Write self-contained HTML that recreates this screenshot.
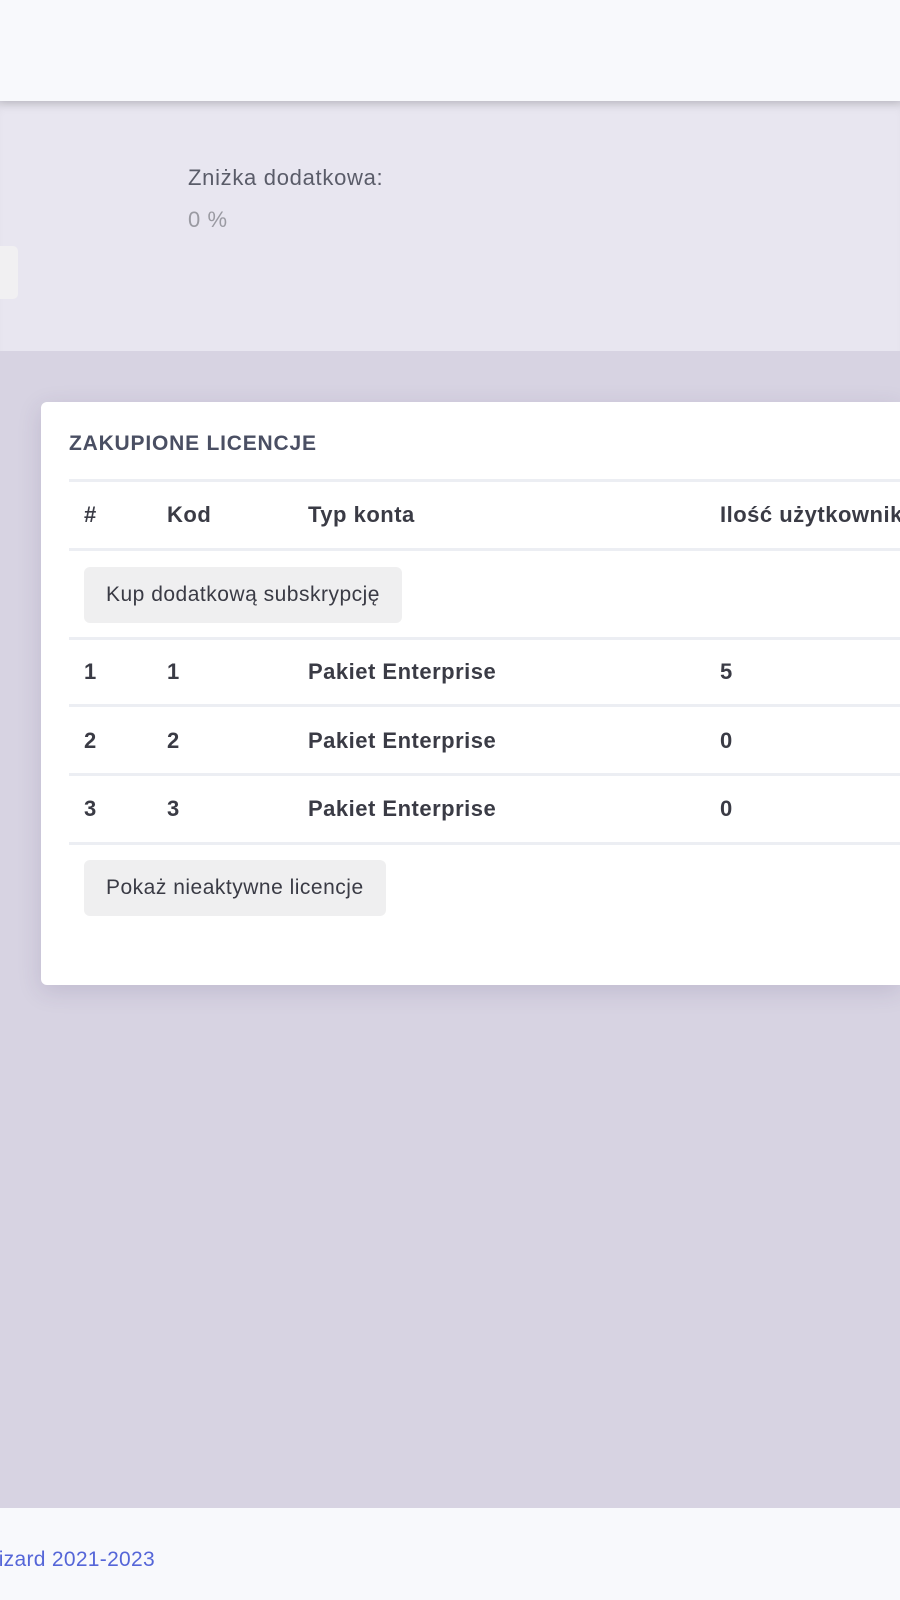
<!DOCTYPE html>
<html><head><meta charset="utf-8"><style>
*{margin:0;padding:0;box-sizing:border-box}
body{width:900px;height:1600px;background:#d7d3e2;font-family:"Liberation Sans",sans-serif;position:relative;overflow:hidden;color:#3a3b45}
.clip{position:absolute;left:0;top:0;width:900px;height:1600px;overflow:hidden}
.hdr{position:absolute;left:0;top:0;width:900px;height:101px;background:#f8f9fc;box-shadow:0 2px 8px rgba(0,0,0,.12);z-index:2}
.info{position:absolute;left:0;top:101px;width:900px;height:250px;background:#e8e6f0;box-shadow:inset 0 10px 12px -8px rgba(0,0,0,.12)}
.lbl{position:absolute;left:188px;top:165px;font-size:22px;letter-spacing:0.7px;color:#5a5c69}
.val{position:absolute;left:188px;top:207px;font-size:22px;letter-spacing:0.6px;color:#9a9aa2}
.sbtn{position:absolute;left:-10px;top:246px;width:28px;height:53px;background:#f1f0f2;border-radius:5px}
.card{position:absolute;left:41px;top:402px;width:859px;height:583px;background:#fff;border-radius:6px 0 0 6px;box-shadow:0 6px 24px rgba(60,50,100,.15);overflow:hidden}
.t{position:absolute;font-weight:bold;font-size:22px;letter-spacing:0.5px;color:#3a3b45;white-space:nowrap}
.ln{position:absolute;left:28px;width:860px;height:3px;background:#eceef3}
.btn{position:absolute;left:43px;height:56px;background:#efeff0;border-radius:6px;font-size:21px;letter-spacing:0.5px;color:#3a3b45;padding:0 22px;line-height:56px;white-space:nowrap}
.ft{position:absolute;left:0;top:1508px;width:900px;height:92px;background:#f8f9fc}
.ft span{position:absolute;right:745px;top:40px;font-size:21px;letter-spacing:0.3px;color:#5566d8;white-space:nowrap}
</style></head><body><div class="clip">
<div class="hdr"></div>
<div class="info"></div>
<div class="lbl">Zniżka dodatkowa:</div>
<div class="val">0 %</div>
<div class="sbtn"></div>
<div class="card">
<div class="t" style="left:28px;top:30px;font-size:21px;letter-spacing:0.8px;color:#4a4f63">ZAKUPIONE LICENCJE</div>
<div class="ln" style="top:77px"></div>
<div class="t" style="left:43px;top:100px">#</div>
<div class="t" style="left:126px;top:100px">Kod</div>
<div class="t" style="left:267px;top:100px">Typ konta</div>
<div class="t" style="left:679px;top:100px">Ilość użytkowników</div>
<div class="ln" style="top:146px"></div>
<div class="btn" style="top:165px">Kup dodatkową subskrypcję</div>
<div class="ln" style="top:235px"></div>
<div class="t" style="left:43px;top:257px">1</div><div class="t" style="left:126px;top:257px">1</div><div class="t" style="left:267px;top:257px">Pakiet Enterprise</div><div class="t" style="left:679px;top:257px">5</div>
<div class="ln" style="top:302px"></div>
<div class="t" style="left:43px;top:326px">2</div><div class="t" style="left:126px;top:326px">2</div><div class="t" style="left:267px;top:326px">Pakiet Enterprise</div><div class="t" style="left:679px;top:326px">0</div>
<div class="ln" style="top:371px"></div>
<div class="t" style="left:43px;top:394px">3</div><div class="t" style="left:126px;top:394px">3</div><div class="t" style="left:267px;top:394px">Pakiet Enterprise</div><div class="t" style="left:679px;top:394px">0</div>
<div class="ln" style="top:440px"></div>
<div class="btn" style="top:458px">Pokaż nieaktywne licencje</div>
</div>
<div class="ft"><span>Copyright © Wizard 2021-2023</span></div>
</div></body></html>
